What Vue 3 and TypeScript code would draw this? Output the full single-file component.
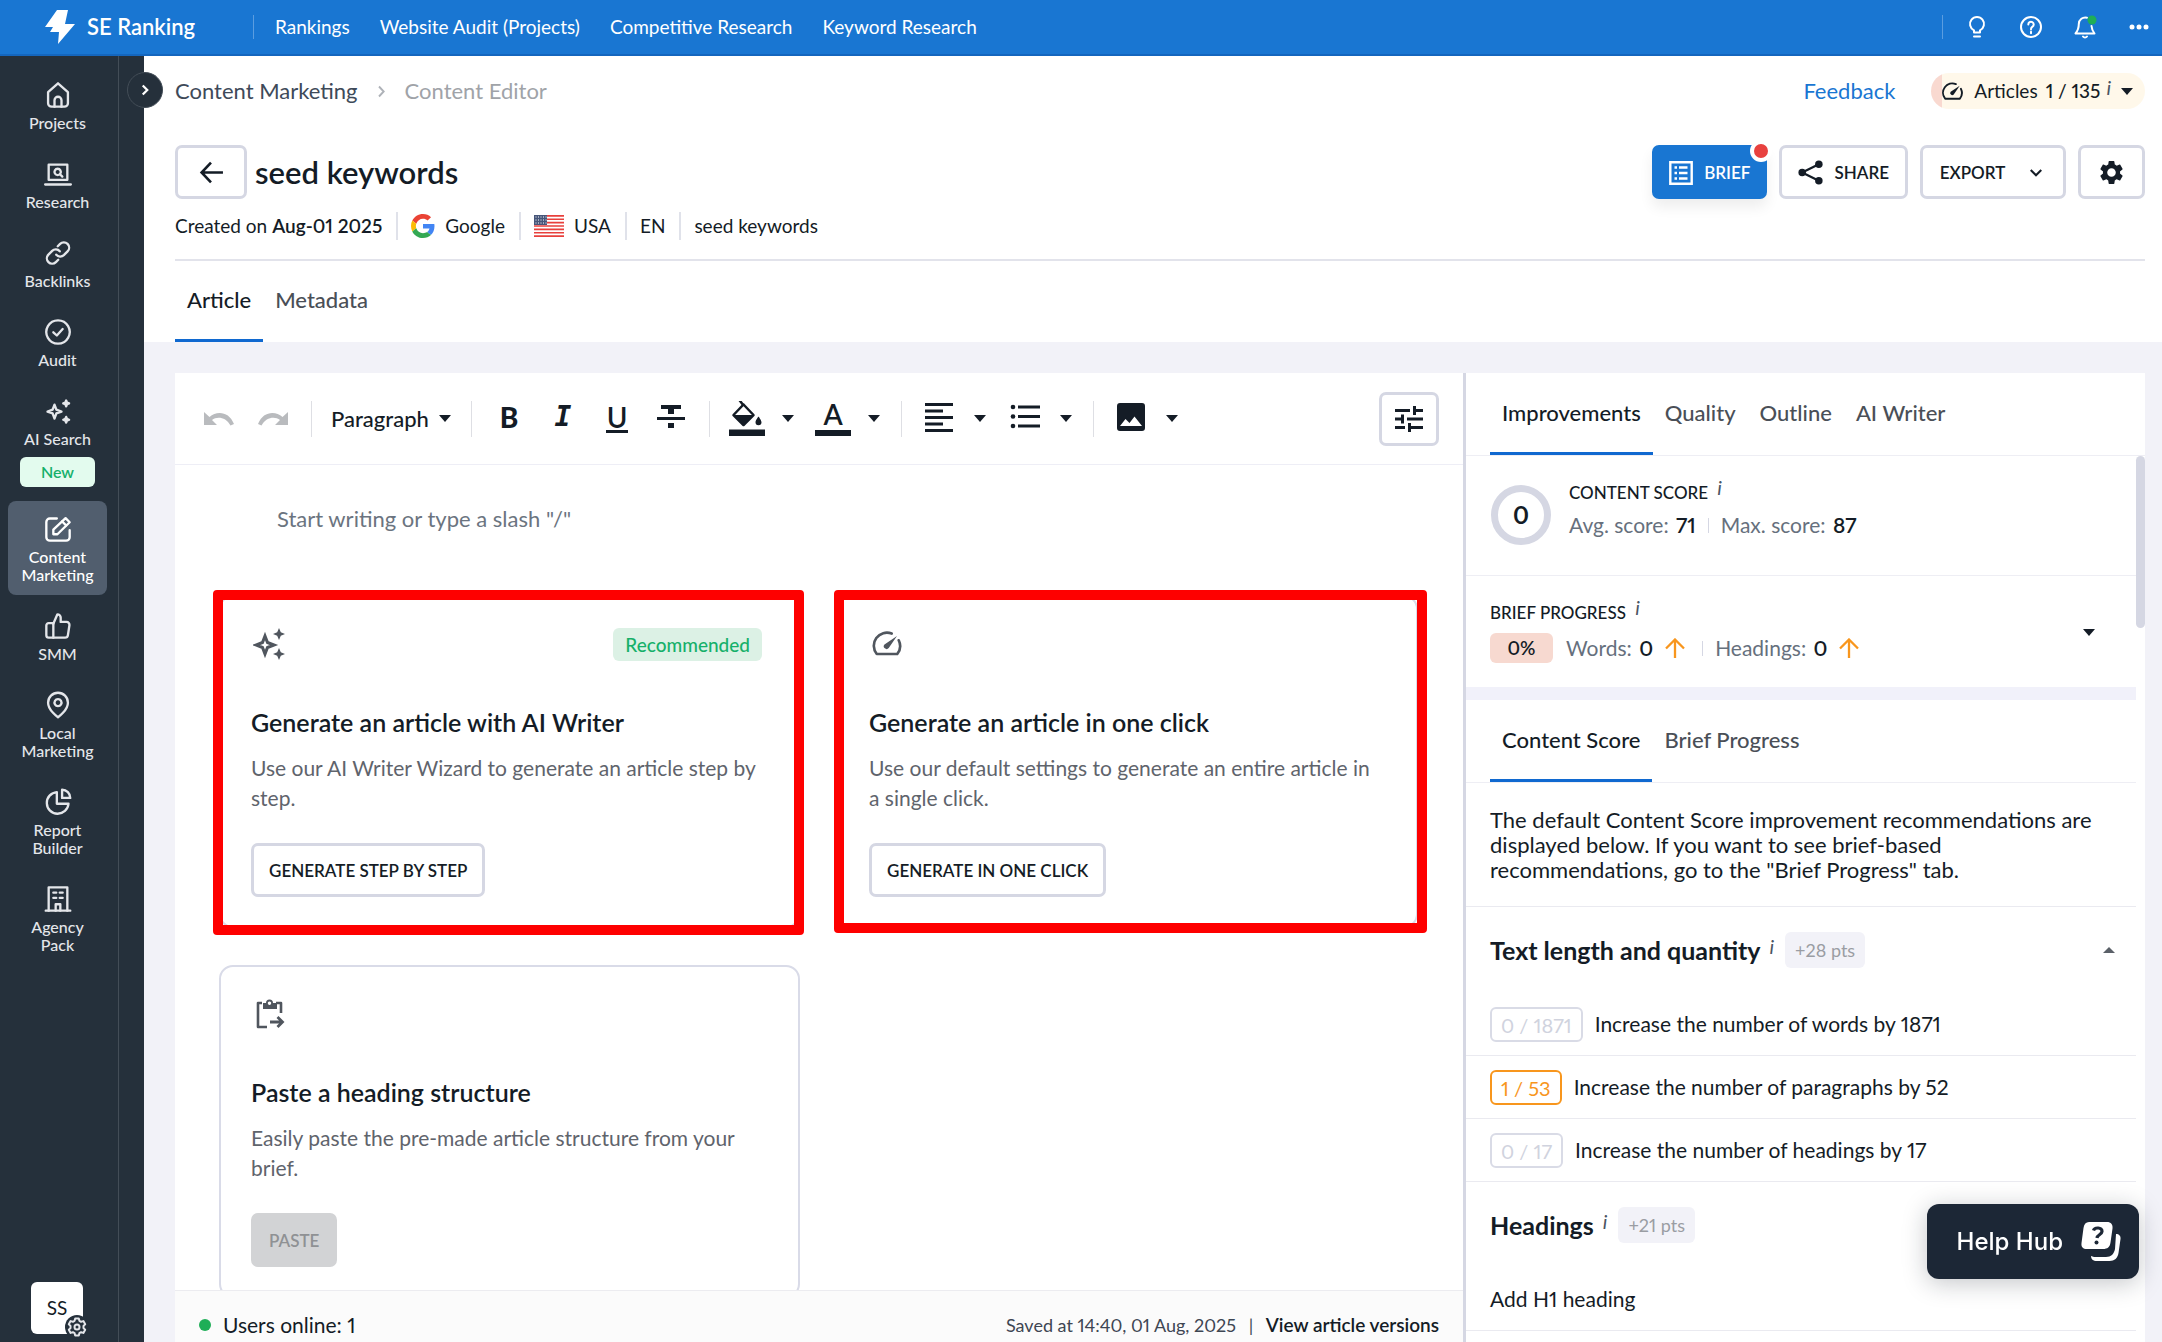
<script setup lang="ts">
import { ref } from 'vue'

interface NavItem {
  lines: string[]
  paths: string[]
  badge?: string
  active?: boolean
}

interface Recommendation {
  chip?: string
  tone?: 'muted' | 'warn'
  text: string
}

interface Section {
  title: string
  points: string
  open: boolean
  items: Recommendation[]
}

const topLinks = ['Rankings', 'Website Audit (Projects)', 'Competitive Research', 'Keyword Research']

const navItems: NavItem[] = [
  { lines: ['Projects'], paths: ['M3.5 9.5 12 2l8.500 7.500V19a3 3 0 0 1-3 3h-11a3 3 0 0 1-3-3z', 'M9 22v-5.500a3 3 0 0 1 6 0V22'] },
  { lines: ['Research'], paths: ['M4 4h16v13H4z', 'M1 21h22', 'M11.700 7.500a2.700 2.700 0 1 0 .01 0z', 'M13.700 12.200l2 2'] },
  { lines: ['Backlinks'], paths: ['M10.500 13.500a4.500 4.500 0 0 0 6.500.3l3.200-3.200a4.500 4.500 0 0 0-6.400-6.400l-2 2', 'M13.500 10.500a4.500 4.500 0 0 0-6.500-.3l-3.200 3.200a4.500 4.500 0 0 0 6.400 6.400l2-2'] },
  { lines: ['Audit'], paths: ['M12 2a10 10 0 1 0 .01 0z', 'M8 12.300l3 2.700 5-5.500'] },
  {
    lines: ['AI Search'],
    badge: 'New',
    paths: ['M9 6.500l1.600 4.400L15 12.500l-4.400 1.600L9 18.500l-1.600-4.400L3 12.500l4.400-1.600z', 'M19 3l.7 1.800 1.800.7-1.800.7L19 8l-.7-1.800-1.800-.7 1.800-.7z', 'M19 17l.7 1.800 1.800.7-1.800.7L19 22l-.7-1.800-1.800-.7 1.800-.7z'],
  },
  {
    lines: ['Content', 'Marketing'],
    active: true,
    paths: ['M11 3H5a3 3 0 0 0-3 3v13a3 3 0 0 0 3 3h14a3 3 0 0 0 3-3v-6', 'M8 16.500v-4L18.500 2.700l3.500 3.500-10.500 10.300z', 'M15.500 5.500l3.500 3.500'],
  },
  { lines: ['SMM'], paths: ['M2 11.500a2 2 0 0 1 2-2h4V22H4a2 2 0 0 1-2-2z', 'M8 10l3.500-8a2.800 2.800 0 0 1 2.800 2.800V8.500h5a2.500 2.500 0 0 1 2.500 2.900l-1.300 8.400A2.500 2.500 0 0 1 18 22H8'] },
  { lines: ['Local', 'Marketing'], paths: ['M12 22.500S3.500 16.500 3.500 10a8.500 8.500 0 0 1 17 0c0 6.500-8.500 12.500-8.500 12.500z', 'M12 7a3 3 0 1 0 .01 0z'] },
  { lines: ['Report', 'Builder'], paths: ['M11 3.500a9.300 9.300 0 1 0 10 10H11z', 'M15.500 1.500a7 7 0 0 1 7 7h-7z'] },
  { lines: ['Agency', 'Pack'], paths: ['M4 22V2h16v20', 'M1.500 22h21', 'M10 22v-5.500h4V22', 'M8 6.500h2.500M13.500 6.500H16M8 11h2.500M13.500 11H16'] },
]

const sideTabs = ['Improvements', 'Quality', 'Outline', 'AI Writer']
const activeSideTab = ref('Improvements')
const scoreTabs = ['Content Score', 'Brief Progress']
const activeScoreTab = ref('Content Score')
const docTabs = ['Article', 'Metadata']
const activeDocTab = ref('Article')
const draft = ref('')

const sections: Section[] = [
  {
    title: 'Text length and quantity',
    points: '+28 pts',
    open: true,
    items: [
      { chip: '0 / 1871', tone: 'muted', text: 'Increase the number of words by 1871' },
      { chip: '1 / 53', tone: 'warn', text: 'Increase the number of paragraphs by 52' },
      { chip: '0 / 17', tone: 'muted', text: 'Increase the number of headings by 17' },
    ],
  },
  { title: 'Headings', points: '+21 pts', open: false, items: [{ text: 'Add H1 heading' }] },
]
</script>

<template>
  <div class="app">
    <header class="topbar">
      <a class="brand" href="#">
        <svg class="brand-mark" viewBox="0 0 30 34"><path d="M12 0h11l-3 14h10L13 34l1-12H5l3-5H0z" fill="#fff" /></svg>
        <span>SE Ranking</span>
      </a>
      <nav class="top-links">
        <a v-for="link in topLinks" :key="link" href="#">{{ link }}</a>
      </nav>
      <div class="top-actions">
        <button aria-label="Ideas">
          <svg viewBox="0 0 24 24" class="line"><path d="M9 17.500v-2.200a7 7 0 1 1 6 0v2.200z" /><path d="M9 21.500h6" /></svg>
        </button>
        <button aria-label="Help">
          <svg viewBox="0 0 24 24" class="line"><circle cx="12" cy="12" r="10" /><path d="M9.300 9.500a2.700 2.700 0 1 1 4.200 2.200c-1 .7-1.500 1.200-1.500 2.500" /><path d="M12 16.500v1.700" /></svg>
        </button>
        <button aria-label="Notifications">
          <svg viewBox="0 0 24 24" class="line"><path d="M14 2.700A6.500 6.500 0 0 0 5.800 9c0 5-.8 6.500-3.300 9.500h19c-1.800-2.300-2.700-4-3-7.500" /><path d="M10 21.500c1 1.300 3 1.300 4 0" /><circle cx="19" cy="5" r="4.500" fill="#1fae57" stroke="none" /></svg>
        </button>
        <button aria-label="More">
          <svg viewBox="0 0 24 24" fill="#fff"><circle cx="5" cy="12" r="2.500" /><circle cx="12" cy="12" r="2.500" /><circle cx="19" cy="12" r="2.500" /></svg>
        </button>
      </div>
    </header>

    <div class="body">
      <aside class="sidebar">
        <nav class="side-nav">
          <a v-for="item in navItems" :key="item.lines[0]" href="#" class="side-item" :class="{ active: item.active }">
            <svg viewBox="0 0 24 24" class="line"><path v-for="d in item.paths" :key="d" :d="d" /></svg>
            <span v-for="line in item.lines" :key="line">{{ line }}</span>
            <em v-if="item.badge">{{ item.badge }}</em>
          </a>
        </nav>
        <button class="avatar">
          SS
          <svg viewBox="0 0 24 24" class="avatar-gear">
            <circle cx="12" cy="12" r="12" fill="#25303b" />
            <path d="M10.200 3.500h3.600l.6 2.300 1.700 1 2.300-.7 1.800 3.100-1.700 1.700v2.200l1.700 1.700-1.800 3.100-2.300-.7-1.700 1-.6 2.300h-3.600l-.6-2.300-1.700-1-2.300.7-1.800-3.100 1.700-1.700v-2.200L3.800 9.200l1.800-3.100 2.300.7 1.700-1z" fill="none" stroke="#e4e6ea" stroke-width="2" stroke-linejoin="round" />
            <circle cx="12" cy="12" r="2.500" fill="none" stroke="#e4e6ea" stroke-width="2" />
          </svg>
        </button>
      </aside>
      <div class="rail">
        <button class="rail-toggle" aria-label="Expand menu">
          <svg viewBox="0 0 24 24"><path d="M9 6l6 6-6 6" fill="none" stroke="#fff" stroke-width="3" /></svg>
        </button>
      </div>

      <main class="main">
        <section class="head">
          <div class="crumb-row">
            <nav class="crumbs">
              <a href="#">Content Marketing</a>
              <svg viewBox="0 0 24 24"><path d="M8 4l7.500 8L8 20" fill="none" stroke="#aeb2b8" stroke-width="3" /></svg>
              <span>Content Editor</span>
            </nav>
            <div class="crumb-actions">
              <a href="#" class="feedback">Feedback</a>
              <button class="quota">
                <svg viewBox="0 0 24 24" class="gauge"><path d="M15.500 4.200A9.800 9.800 0 0 0 4.300 19.500h15.400a9.800 9.800 0 0 0 1.100-10.300" fill="none" stroke="currentColor" stroke-width="2" stroke-linejoin="round" stroke-linecap="round" /><path d="M19.500 6l-6.200 9a2 2 0 0 1-3.200-2.700z" fill="currentColor" /></svg>
                <span>Articles</span>
                <strong>1 / 135</strong>
                <i class="info">i</i>
                <span class="caret"></span>
              </button>
            </div>
          </div>

          <div class="title-row">
            <button class="btn back" aria-label="Back">
              <svg viewBox="0 0 24 24"><path d="M11.500 2.500 2.500 12l9 9.500M3 12h20" fill="none" stroke="#141c26" stroke-width="2.500" /></svg>
            </button>
            <h1>seed keywords</h1>
            <div class="title-actions">
              <button class="btn primary">
                <svg viewBox="0 0 24 24"><path d="M1.300 1.300h21.400v21.400H1.300z" fill="none" stroke="#fff" stroke-width="2.400" /><path d="M5.500 6.500H8M5.500 12H8M5.500 17.500H8M10 6.500h8.500M10 12h8.500M10 17.500h8.500" stroke="#fff" stroke-width="2.600" /></svg>
                BRIEF
                <span class="alert-dot"></span>
              </button>
              <button class="btn share">
                <svg viewBox="0 0 24 24"><path d="M20 4 4 12l16 8" fill="none" stroke="#141c26" stroke-width="2.200" /><circle cx="20" cy="4" r="3.600" fill="#141c26" /><circle cx="4" cy="12" r="3.600" fill="#141c26" /><circle cx="20" cy="20" r="3.600" fill="#141c26" /></svg>
                SHARE
              </button>
              <button class="btn export">
                EXPORT
                <svg viewBox="0 0 12 12"><path d="M1.500 3.500 6 8l4.500-4.500" fill="none" stroke="#141c26" stroke-width="1.800" /></svg>
              </button>
              <button class="btn settings" aria-label="Settings">
                <svg viewBox="1.500 1.500 21 21"><path fill="#141c26" d="M19.140 12.940c.04-.3.060-.61.060-.94 0-.32-.02-.64-.07-.94l2.030-1.580a.49.490 0 0 0 .12-.61l-1.920-3.320a.488.488 0 0 0-.59-.22l-2.390.96c-.5-.38-1.030-.7-1.620-.94l-.36-2.540a.484.484 0 0 0-.48-.41h-3.840c-.24 0-.43.170-.47.410l-.36 2.540c-.59.240-1.130.57-1.620.94l-2.390-.96c-.22-.08-.47 0-.59.220L2.740 8.870c-.12.210-.08.470.12.610l2.030 1.580c-.05.3-.09.630-.09.940s.02.640.07.940l-2.030 1.580a.49.490 0 0 0-.12.610l1.920 3.320c.12.220.37.290.59.220l2.390-.96c.5.380 1.030.7 1.620.94l.36 2.540c.05.240.24.410.48.410h3.840c.24 0 .44-.17.470-.41l.36-2.540c.59-.24 1.130-.56 1.620-.94l2.390.96c.22.080.47 0 .59-.22l1.920-3.320c.12-.22.070-.47-.12-.61zM12 15.600A3.600 3.600 0 1 1 12 8.400a3.600 3.600 0 0 1 0 7.200z" /></svg>
              </button>
            </div>
          </div>

          <ul class="meta">
            <li>Created on <strong>Aug-01 2025</strong></li>
            <li>
              <svg viewBox="0 0 48 48" class="google">
                <path fill="#EA4335" d="M24 9.500c3.540 0 6.710 1.220 9.210 3.600l6.850-6.850C35.900 2.380 30.470 0 24 0 14.620 0 6.510 5.380 2.560 13.220l7.980 6.190C12.430 13.720 17.740 9.500 24 9.500z" />
                <path fill="#4285F4" d="M46.980 24.550c0-1.570-.15-3.090-.38-4.550H24v9.020h12.940c-.58 2.960-2.260 5.480-4.780 7.180l7.730 6c4.510-4.180 7.090-10.360 7.090-17.650z" />
                <path fill="#FBBC05" d="M10.530 28.590c-.48-1.450-.76-2.990-.76-4.590s.27-3.140.76-4.590l-7.980-6.190C.92 16.460 0 20.120 0 24c0 3.880.92 7.540 2.560 10.780l7.970-6.190z" />
                <path fill="#34A853" d="M24 48c6.480 0 11.930-2.130 15.890-5.810l-7.730-6c-2.150 1.450-4.920 2.300-8.160 2.300-6.260 0-11.570-4.220-13.470-9.910l-7.980 6.190C6.510 42.620 14.620 48 24 48z" />
              </svg>
              Google
            </li>
            <li>
              <svg viewBox="0 0 30 22" class="flag">
                <path d="M0 0h30v22H0z" fill="#fff" />
                <path d="M0 .85h30M0 4.230h30M0 7.620h30M0 11h30M0 14.380h30M0 17.770h30M0 21.150h30" stroke="#e8403c" stroke-width="1.700" />
                <path d="M0 0h13v10H0z" fill="#46567a" />
                <path d="M1.500 2h11M1.500 5h11M1.500 8h11" stroke="#fff" stroke-width="1" stroke-dasharray="1 1.500" />
              </svg>
              USA
            </li>
            <li>EN</li>
            <li>seed keywords</li>
          </ul>

          <div class="tabs doc-tabs" role="tablist">
            <button v-for="tab in docTabs" :key="tab" role="tab" :class="{ on: tab === activeDocTab }" @click="activeDocTab = tab">{{ tab }}</button>
          </div>
        </section>

        <div class="workspace">
          <section class="editor">
            <div class="toolbar">
              <div class="group">
                <button class="tool faded" aria-label="Undo"><svg viewBox="0 1 36 36"><path d="M3 12v13h13l-5-5c5-4 14-3 18.500 5.500l3.500-1.500C28 11 15.500 10.500 8.500 17z" /></svg></button>
                <button class="tool faded" aria-label="Redo"><svg viewBox="0 1 36 36"><path d="M33 12v13H20l5-5c-5-4-14-3-18.500 5.500L3 24C8 11 20.500 10.500 27.500 17z" /></svg></button>
              </div>
              <div class="group">
                <label class="style-select">
                  <select aria-label="Text style"><option>Paragraph</option></select>
                  <span class="caret"></span>
                </label>
              </div>
              <div class="group">
                <button class="tool glyph bold">B</button>
                <button class="tool glyph italic">I</button>
                <button class="tool glyph underline"><span>U</span></button>
                <button class="tool" aria-label="Strikethrough"><svg viewBox="0 2 36 36"><path d="M8 6h20v4h-7v5h-6v-5H8zM4 18h28v3H4zM15 24h6v5h-6z" /></svg></button>
              </div>
              <div class="group wide">
                <button class="tool-menu" aria-label="Highlight colour">
                  <svg viewBox="0 2 36 36"><path d="M10 0.500l4.500 6" stroke="#141c26" stroke-width="2.500" /><path d="M14.500 5.500l10 10.500-10 10-10-10z" fill="none" stroke="#141c26" stroke-width="2.500" stroke-linejoin="round" /><path d="M4.500 16h20l-10 10z" /><path d="M29.500 17.500s3 3.800 3 5.700a3 3 0 0 1-6 0c0-1.900 3-5.700 3-5.700zM0 30.500h36v6.500H0z" /></svg>
                  <span class="caret"></span>
                </button>
                <button class="tool-menu" aria-label="Text colour">
                  <span class="text-color">A</span>
                  <span class="caret"></span>
                </button>
              </div>
              <div class="group wide">
                <button class="tool-menu" aria-label="Alignment">
                  <svg viewBox="0 2 36 36"><path d="M4 4h28v3H4zM4 10.500h18v3H4zM4 17h28v3H4zM4 23.500h18v3H4zM4 30h28v3H4z" /></svg>
                  <span class="caret"></span>
                </button>
                <button class="tool-menu" aria-label="Lists">
                  <svg viewBox="0 2 36 36"><circle cx="6" cy="8" r="2.300" /><circle cx="6" cy="17.500" r="2.300" /><circle cx="6" cy="27" r="2.300" /><path d="M11 6.500h22v3H11zM11 16h22v3H11zM11 25.500h22v3H11z" /></svg>
                  <span class="caret"></span>
                </button>
              </div>
              <div class="group wide">
                <button class="tool-menu" aria-label="Image">
                  <svg viewBox="0 2 36 36"><path d="M7 4h22a3 3 0 0 1 3 3v22a3 3 0 0 1-3 3H7a3 3 0 0 1-3-3V7a3 3 0 0 1 3-3zM7 27h22l-7.500-9.500-5 6.500-4-4z" fill-rule="evenodd" /></svg>
                  <span class="caret"></span>
                </button>
              </div>
              <button class="btn tune" aria-label="Editor settings">
                <svg viewBox="0 0 28 28"><path d="M0 4h15v3H0zM21 4h7v3h-7zM18 1h3v9h-3zM0 12.500h9v3H0zM12 12.500h16v3H12zM6 9.500h3v9H6zM0 21h10v3H0zM16 21h12v3H16zM13 18h3v9h-3z" fill="#141c26" /></svg>
              </button>
            </div>

            <div class="canvas">
              <textarea v-model="draft" rows="1" aria-label="Article" placeholder='Start writing or type a slash "/"'></textarea>
              <div class="cards">
                <article class="card">
                  <div class="card-top">
                    <svg viewBox="0 0 32 32"><path d="M12 8l2.500 6.500L21 17l-6.500 2.500L12 26l-2.500-6.500L3 17l6.500-2.500z" fill="none" stroke="#50565e" stroke-width="3" /><path d="M26 0l1.800 4.200L32 6l-4.200 1.800L26 12l-1.800-4.200L20 6l4.200-1.800zM26 20l1.800 4.200L32 26l-4.200 1.800L26 32l-1.800-4.200L20 26l4.200-1.800z" fill="#50565e" /></svg>
                    <span class="tag">Recommended</span>
                  </div>
                  <h2>Generate an article with AI Writer</h2>
                  <p>Use our AI Writer Wizard to generate an article step by step.</p>
                  <button class="btn">GENERATE STEP BY STEP</button>
                  <span class="frame first"></span>
                </article>
                <article class="card">
                  <div class="card-top">
                    <svg viewBox="0 0 24 24" class="gauge-lg"><path d="M15.500 4.200A9.800 9.800 0 0 0 4.300 19.500h15.400a9.800 9.800 0 0 0 1.100-10.300" fill="none" stroke="currentColor" stroke-width="2" stroke-linejoin="round" stroke-linecap="round" /><path d="M19.500 6l-6.200 9a2 2 0 0 1-3.200-2.700z" fill="currentColor" /></svg>
                  </div>
                  <h2>Generate an article in one click</h2>
                  <p>Use our default settings to generate an entire article in a single click.</p>
                  <button class="btn">GENERATE IN ONE CLICK</button>
                  <span class="frame second"></span>
                </article>
                <article class="card">
                  <div class="card-top">
                    <svg viewBox="0 0 32 32"><path d="M9 5H5v24h9M23 5h5v10" fill="none" stroke="#50565e" stroke-width="2.600" stroke-linejoin="round" /><path d="M10 5h3a3.500 3.500 0 0 1 7 0h4v6H10zM16.500 3.500a1.700 1.700 0 1 0 .01 0z" fill="#50565e" fill-rule="evenodd" /><path d="M17 24h12M24.500 19l5 5-5 5" fill="none" stroke="#50565e" stroke-width="2.800" /></svg>
                  </div>
                  <h2>Paste a heading structure</h2>
                  <p>Easily paste the pre-made article structure from your brief.</p>
                  <button class="btn disabled" disabled>PASTE</button>
                </article>
              </div>
            </div>

            <footer class="status">
              <span class="online"><span class="green-dot"></span>Users online: 1</span>
              <span class="saved">Saved at 14:40, 01 Aug, 2025 <span class="bar">|</span> <a href="#">View article versions</a></span>
            </footer>
          </section>

          <aside class="panel">
            <div class="tabs side-tabs" role="tablist">
              <button v-for="tab in sideTabs" :key="tab" role="tab" :class="{ on: tab === activeSideTab }" @click="activeSideTab = tab">{{ tab }}</button>
            </div>
            <div class="scroller">
              <div class="scroll-body">
                <div class="score">
                  <div class="ring">0</div>
                  <div>
                    <div class="caption">CONTENT SCORE <i class="info">i</i></div>
                    <div class="stats"><span>Avg. score: <b>71</b></span><span class="tick"></span><span>Max. score: <b>87</b></span></div>
                  </div>
                </div>
                <div class="brief">
                  <div>
                    <div class="caption">BRIEF PROGRESS <i class="info">i</i></div>
                    <div class="stats">
                      <span class="percent">0%</span>
                      <span>Words: <b>0</b></span>
                      <svg viewBox="0 0 20 20"><path d="M10 20V1.500M1 10.500l9-9 9 9" fill="none" stroke="#f8961d" stroke-width="2.300" /></svg>
                      <span class="tick"></span>
                      <span>Headings: <b>0</b></span>
                      <svg viewBox="0 0 20 20"><path d="M10 20V1.500M1 10.500l9-9 9 9" fill="none" stroke="#f8961d" stroke-width="2.300" /></svg>
                    </div>
                  </div>
                  <button class="toggle" aria-label="Show brief progress"><span class="caret"></span></button>
                </div>
                <div class="tabs score-tabs" role="tablist">
                  <button v-for="tab in scoreTabs" :key="tab" role="tab" :class="{ on: tab === activeScoreTab }" @click="activeScoreTab = tab">{{ tab }}</button>
                </div>
                <p class="note">The default Content Score improvement recommendations are displayed below. If you want to see brief-based recommendations, go to the "Brief Progress" tab.</p>
                <section v-for="section in sections" :key="section.title">
                  <header class="section-head">
                    <h3>{{ section.title }}</h3>
                    <i class="info">i</i>
                    <span class="points">{{ section.points }}</span>
                    <button v-if="section.open" class="toggle" aria-label="Collapse section"><span class="caret up"></span></button>
                  </header>
                  <ul class="recs">
                    <li v-for="item in section.items" :key="item.text">
                      <span v-if="item.chip" class="chip" :class="item.tone">{{ item.chip }}</span>
                      {{ item.text }}
                    </li>
                  </ul>
                </section>
              </div>
              <div class="scrollbar"><div class="thumb"></div></div>
            </div>
          </aside>
        </div>
      </main>
    </div>

    <button class="help-hub">
      Help Hub
      <svg viewBox="0 0 40 40">
        <path d="M35 12c3 0 5 2 4.500 5l-2 14c-.7 5-4 8-9 8H16c-4 0-6-2-6-5 2 1 4 1 6 1h9c5 0 8-3 9-8z" fill="#fff" />
        <path d="M8 0h18c4 0 6 2.500 5.500 6.500l-2 14c-.6 4.500-3 6.500-7.500 6.500H6c-4 0-6-2-5.500-6L2.500 6C3 2 5 0 8 0z" fill="#fff" />
        <path d="M12.500 8.500c1-3.500 9-3.500 8.500 1-.4 3.500-4.700 3-5 6.500" fill="none" stroke="#1c2736" stroke-width="3.200" />
        <circle cx="15.500" cy="20.500" r="2" fill="#1c2736" />
      </svg>
    </button>
  </div>
</template>

<style>
body {
  margin: 0;
}
</style>

<style scoped>
* {
  box-sizing: border-box;
}

.app {
  height: 100vh;
  display: flex;
  flex-direction: column;
  overflow: hidden;
  font-family: Lato, 'Noto Sans', sans-serif;
  font-size: 21px;
  line-height: 26px;
  font-variant-numeric: proportional-nums;
  color: #141c26;
  background: #f2f2f8;
}

button,
select,
textarea {
  font: inherit;
  font-variant-numeric: proportional-nums;
  color: inherit;
  border: 0;
  padding: 0;
  background: none;
}

a {
  color: inherit;
  text-decoration: none;
}

h1,
h2,
h3,
p,
ul {
  margin: 0;
  padding: 0;
  list-style: none;
}

svg {
  display: block;
  flex: none;
}

.line {
  fill: none;
  stroke: currentColor;
  stroke-width: 2;
  stroke-linecap: round;
  stroke-linejoin: round;
}

.caret {
  width: 0;
  height: 0;
  border: 6px solid transparent;
  border-top: 7px solid #141c26;
  border-bottom: 0;
}

.caret.up {
  border-top: 0;
  border-bottom: 6px solid #5a6068;
}

.info {
  font: italic 20px/20px Lato, sans-serif;
  color: #4a5563;
  position: relative;
  top: -4px;
}

/* Top bar */
.topbar {
  flex: none;
  height: 56px;
  display: flex;
  align-items: center;
  background: #1976d2;
  border-bottom: 2px solid #1466be;
  color: #fff;
  padding: 0 11px 0 45px;
}

.brand {
  display: flex;
  align-items: center;
  gap: 12px;
  width: 208px;
  font-size: 22px;
  font-weight: 600;
}

.brand-mark {
  width: 30px;
  height: 34px;
}

.top-links {
  display: flex;
  gap: 30px;
  font-size: 19px;
  line-height: 24px;
  padding-left: 21px;
  border-left: 1px solid #5b9de0;
}

.top-actions {
  display: flex;
  margin-left: auto;
  gap: 30px;
  padding-left: 22px;
  border-left: 1px solid #5b9de0;
}

.top-actions svg {
  width: 24px;
  height: 24px;
}

/* Sidebar */
.body {
  flex: 1;
  min-height: 0;
  display: flex;
}

.sidebar {
  flex: none;
  width: 119px;
  background: #25303b;
  border-right: 1px solid #434d57;
  padding: 11px 8px 8px;
  display: flex;
  flex-direction: column;
  justify-content: space-between;
}

.side-nav {
  display: flex;
  flex-direction: column;
  gap: 3px;
  width: 99px;
}

.side-item {
  display: flex;
  flex-direction: column;
  align-items: center;
  padding: 14px 0 11px;
  border-radius: 8px;
  font-size: 16px;
  line-height: 18px;
  font-weight: 500;
  color: #e4e6ea;
}

.side-item svg {
  width: 28px;
  height: 28px;
  margin-bottom: 5px;
}

.side-item.active {
  background: #515e6e;
  color: #fff;
}

.side-item em {
  width: 75px;
  margin-top: 9px;
  border-radius: 6px;
  background: #e3fbee;
  color: #16b06a;
  font-style: normal;
  font-weight: 600;
  line-height: 30px;
  text-align: center;
}

.avatar {
  position: relative;
  width: 52px;
  height: 52px;
  margin-left: 23px;
  border-radius: 6px;
  background: #fff;
  font-size: 19px;
}

.avatar-gear {
  position: absolute;
  right: -6px;
  bottom: -5px;
  width: 24px;
  height: 24px;
}

.rail {
  position: relative;
  flex: none;
  width: 25px;
  background: #25303b;
  z-index: 1;
}

.rail-toggle {
  position: absolute;
  top: 16px;
  left: 8px;
  width: 36px;
  height: 36px;
  border-radius: 50%;
  border: 1px solid #434d57;
  background: #25303b;
  display: grid;
  place-items: center;
}

.rail-toggle svg {
  width: 18px;
  height: 18px;
}

/* Page head */
.main {
  flex: 1;
  min-width: 0;
  display: flex;
  flex-direction: column;
}

.head {
  flex: none;
  background: #fff;
  padding: 17px 17px 0 31px;
}

.crumb-row,
.crumbs,
.crumb-actions,
.title-row,
.title-actions,
.meta,
.meta li {
  display: flex;
  align-items: center;
}

.crumb-row {
  height: 36px;
  justify-content: space-between;
  font-size: 22px;
}

.crumbs {
  gap: 16px;
  color: #3e4a59;
}

.crumbs svg {
  width: 15px;
  height: 15px;
}

.crumbs span {
  color: #a0a3a8;
}

.crumb-actions {
  gap: 36px;
}

.feedback {
  color: #1976d2;
}

.quota {
  display: flex;
  align-items: center;
  height: 36px;
  padding: 0 12px 0 10px;
  border-radius: 18px;
  background: linear-gradient(90deg, #f9d9d0 11px, #fff8ea 11px);
  font-size: 19px;
}

.quota strong {
  font-weight: 500;
  margin: 0 6px 0 8px;
}

.quota .caret {
  margin-left: 10px;
}

.gauge {
  width: 23px;
  height: 23px;
  margin-right: 10px;
}

.title-row {
  margin-top: 36px;
}

.btn {
  position: relative;
  display: inline-flex;
  align-items: center;
  justify-content: center;
  gap: 11px;
  height: 54px;
  padding: 1px 15px 0;
  border: 3px solid #d5d7e3;
  border-radius: 7px;
  background: #fff;
  font-size: 17px;
  font-weight: 600;
}

.back {
  width: 72px;
}

.btn svg {
  width: 25px;
  height: 25px;
}

h1 {
  margin-left: 8px;
  font-size: 31px;
  line-height: 36px;
  font-weight: 600;
}

.title-actions {
  margin-left: auto;
  gap: 12px;
}

.btn.primary {
  padding: 1px 14px 0;
  background: #1976d2;
  border-color: #1976d2;
  color: #fff;
  box-shadow: 0 8px 14px rgba(0, 0, 0, 0.07);
}

.primary svg {
  width: 24px;
  height: 24px;
}

.btn.share {
  padding: 1px 16px 0;
}

.alert-dot {
  position: absolute;
  top: -8px;
  right: -8px;
  width: 22px;
  height: 22px;
  border: 4px solid #fff;
  border-radius: 50%;
  background: #e8413f;
}

.btn.export {
  width: 146px;
  padding-right: 18px;
  gap: 24px;
}

.export svg {
  width: 14px;
  height: 14px;
}

.btn.settings {
  width: 67px;
}

.meta {
  margin-top: 14px;
  height: 26px;
  font-size: 19px;
}

.meta li {
  gap: 10px;
  height: 28px;
}

.meta li:first-child {
  gap: 5px;
}

.meta li + li {
  margin-left: 14px;
  padding-left: 13px;
  border-left: 2px solid #e0e2ea;
}

.meta strong {
  font-weight: 600;
}

.google {
  width: 24px;
  height: 24px;
}

.flag {
  width: 30px;
  height: 22px;
}

.tabs {
  display: flex;
}

.tabs button {
  padding: 0 12px;
  border-bottom: 3px solid transparent;
  font-size: 22px;
  font-weight: 500;
  color: #4a4f57;
}

.tabs button.on {
  border-bottom-color: #1069d0;
  color: #141c26;
}

.doc-tabs {
  height: 83px;
  margin-top: 20px;
  border-top: 2px solid #e2e3eb;
}

/* Workspace */
.workspace {
  flex: 1;
  min-height: 0;
  display: flex;
  padding: 31px 17px 0 31px;
}

.editor {
  flex: 1290 1 0;
  min-width: 0;
  display: flex;
  flex-direction: column;
  background: #fff;
  border-right: 3px solid #d5d7e3;
}

.toolbar {
  flex: none;
  height: 92px;
  display: flex;
  align-items: center;
  padding: 0 24px 0 26px;
  border-bottom: 1px solid #eeeef6;
}

.group {
  display: flex;
  align-items: center;
  gap: 18px;
  height: 36px;
}

.group + .group {
  margin-left: 20px;
  padding-left: 19px;
  border-left: 1px solid #dedfe4;
}

.group.wide {
  gap: 21px;
}

.group.wide + .wide {
  margin-left: 21px;
}

.tool {
  width: 36px;
  height: 36px;
  font-size: 28px;
  line-height: 32px;
  text-align: center;
}

.tool.glyph {
  padding-bottom: 4px;
}

.tool svg,
.tool-menu svg {
  width: 36px;
  height: 36px;
  fill: #141c26;
}

.tool.faded svg {
  fill: #b9bbbe;
}

.bold {
  font-weight: 900;
}

.italic {
  font-family: 'DejaVu Sans Mono', monospace;
  font-style: italic;
  font-weight: 700;
}

.underline {
  font-weight: 600;
}

.underline span {
  display: inline-block;
  padding: 0 1px;
  line-height: 26px;
  border-bottom: 3px solid #141c26;
}

.style-select,
.tool-menu {
  display: flex;
  align-items: center;
  gap: 17px;
}

.style-select {
  gap: 10px;
}

select {
  appearance: none;
  font-size: 22px;
  font-weight: 500;
}

.text-color {
  width: 36px;
  height: 35px;
  border-bottom: 6px solid #141c26;
  font-size: 28px;
  line-height: 26px;
  font-weight: 600;
}

.btn.tune {
  width: 60px;
  margin-left: auto;
}

.tune svg {
  width: 28px;
  height: 28px;
}

.canvas {
  flex: 1;
  min-height: 0;
  overflow: hidden;
  padding: 41px 45px 0 44px;
}

textarea {
  display: block;
  width: 100%;
  padding: 0 58px;
  font-size: 22px;
  resize: none;
  outline: 0;
  overflow: hidden;
}

textarea::placeholder {
  color: #6b7480;
  opacity: 1;
}

.cards {
  display: grid;
  grid-template-columns: 1fr 1fr;
  gap: 37px;
  margin-top: 63px;
}

.card {
  position: relative;
  height: 333px;
  padding: 30px 30px 0;
  border: 2px solid #d9dbe8;
  border-radius: 14px;
}

.card-top {
  display: flex;
  justify-content: space-between;
  align-items: center;
  height: 34px;
  padding: 0 6px 0 2px;
}

.card-top svg {
  width: 32px;
  height: 32px;
}

.card-top .gauge-lg {
  color: #50565e;
}

.tag {
  padding: 0 12px;
  border-radius: 6px;
  background: #dcf1e5;
  color: #16b06a;
  font-size: 19px;
  line-height: 33px;
  font-weight: 500;
}

.card h2 {
  margin-top: 46px;
  font-size: 25px;
  line-height: 30px;
  font-weight: 600;
}

.card p {
  margin-top: 16px;
  padding-right: 12px;
  line-height: 30px;
  color: #5f646c;
}

.card .btn {
  margin-top: 30px;
}

.btn.disabled {
  background: #d2d3d5;
  border-color: #d2d3d5;
  color: #8f9194;
}

.frame {
  position: absolute;
  border: 10px solid #fe0000;
  border-radius: 4px;
  pointer-events: none;
}

.frame.first {
  inset: -7px -6px -9px -8px;
}

.frame.second {
  inset: -7px -11px -7px -5px;
}

.status {
  flex: none;
  height: 52px;
  display: flex;
  align-items: center;
  justify-content: space-between;
  padding: 17px 24px 0;
  border-top: 1px solid #ececf0;
  background: #fbfbfb;
}

.online {
  display: flex;
  align-items: center;
  gap: 12px;
}

.green-dot {
  width: 12px;
  height: 12px;
  border-radius: 50%;
  background: #1fae57;
}

.saved {
  font-size: 18px;
  color: #3e4653;
}

.bar {
  margin: 0 8px;
}

.saved a {
  color: #141c26;
  font-size: 19px;
  font-weight: 600;
}

/* Right panel */
.panel {
  flex: 680 1 0;
  min-width: 0;
  display: flex;
  flex-direction: column;
  background: #fff;
}

.side-tabs,
.score-tabs {
  flex: none;
  height: 83px;
  padding-left: 24px;
  border-bottom: 1px solid #eeeef4;
}

.scroller {
  flex: 1;
  min-height: 0;
  display: flex;
  overflow: hidden;
}

.scroll-body {
  flex: 1;
  min-width: 0;
}

.scrollbar {
  width: 9px;
}

.thumb {
  height: 172px;
  border-radius: 5px;
  background: #d5d7e3;
}

.score {
  display: flex;
  gap: 18px;
  height: 120px;
  padding: 25px 25px 0;
  border-bottom: 1px solid #eeeef4;
}

.ring {
  width: 60px;
  height: 60px;
  margin-top: 4px;
  border: 7px solid #d5d7e3;
  border-radius: 50%;
  font-size: 24px;
  line-height: 46px;
  font-weight: 700;
  text-align: center;
}

.caption {
  font-size: 17px;
  line-height: 24px;
  font-weight: 500;
}

.caption .info {
  margin-left: 5px;
}

.stats {
  display: flex;
  align-items: center;
  height: 30px;
  margin-top: 5px;
  color: #66707d;
}

.stats b {
  margin-left: 2px;
  font-weight: 600;
  color: #141c26;
}

.tick {
  width: 1px;
  height: 15px;
  margin: 0 12px;
  background: #d5d7e3;
}

.brief {
  display: flex;
  justify-content: space-between;
  height: 124px;
  padding: 25px 41px 0 24px;
  border-bottom: 13px solid #f1f1fa;
}

.brief .stats {
  margin-top: 8px;
}

.stats svg {
  width: 20px;
  height: 20px;
  margin: 0 5px 0 12px;
}

.percent {
  width: 63px;
  margin-right: 13px;
  border-radius: 6px;
  background: #f7d9d0;
  color: #141c26;
  font-size: 19px;
  line-height: 30px;
  font-weight: 600;
  text-align: center;
}

.toggle {
  display: flex;
  align-items: center;
}

.brief .toggle {
  height: 62px;
}

.note {
  padding: 24px 40px 24px 24px;
  font-size: 22px;
  line-height: 25px;
  border-bottom: 1px solid #eaeaf0;
}

.section-head {
  display: flex;
  align-items: center;
  height: 86px;
  padding: 0 21px 0 24px;
}

.section-head h3 {
  font-size: 25px;
  line-height: 30px;
  font-weight: 700;
}

.section-head .info {
  margin: 0 11px 0 9px;
}

.section-head .toggle {
  margin-left: auto;
}

.points {
  padding: 0 10px;
  border-radius: 6px;
  background: #f2f2f8;
  color: #9a9da3;
  font-size: 18px;
  line-height: 36px;
}

.recs li {
  display: flex;
  align-items: center;
  gap: 12px;
  height: 63px;
  padding-left: 24px;
  border-bottom: 1px solid #eaeaf0;
}

.chip {
  padding: 2px 9px 0;
  border: 2px solid #d9dbe6;
  border-radius: 6px;
  font-size: 20px;
  line-height: 29px;
  color: #d0d3de;
}

.chip.warn {
  border-color: #f8961d;
  color: #f8961d;
}

.help-hub {
  position: fixed;
  right: 23px;
  bottom: 63px;
  display: flex;
  align-items: center;
  gap: 18px;
  height: 75px;
  padding: 0 18px 0 30px;
  border-radius: 12px;
  background: #1c2736;
  color: #fff;
  font-family: Inter, sans-serif;
  font-size: 24px;
  font-weight: 500;
  box-shadow: 0 4px 24px rgba(20, 28, 38, 0.25);
}

.help-hub svg {
  width: 40px;
  height: 40px;
}
</style>
